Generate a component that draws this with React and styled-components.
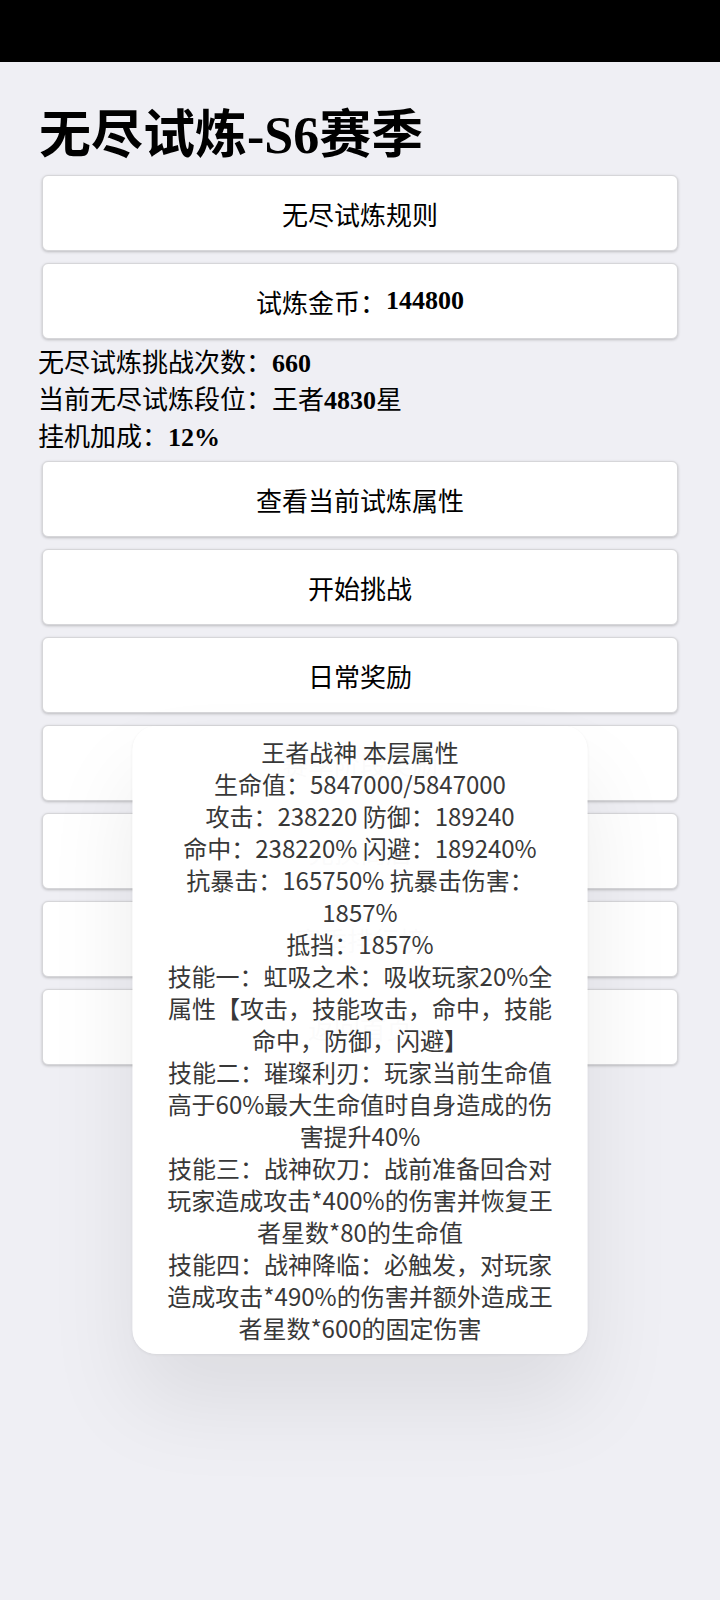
import React from "react";
import styled, { createGlobalStyle } from "styled-components";

const GlobalStyle = createGlobalStyle`
  html, body {
    margin: 0;
    padding: 0;
    background: #efeff4;
  }
  body {
    font-family: "Liberation Serif", "Noto Sans CJK SC", serif;
    color: #000;
  }
`;

const StatusBar = styled.div`
  height: 62px;
  background: #000;
`;

const Page = styled.div`
  position: relative;
  display: flex;
  flex-direction: column;
  min-height: 1538px;
  padding: 0 38px;
  background: #efeff4;
`;

const Title = styled.h1`
  margin: 0;
  padding: 44px 0 3px 1px;
  font-size: 52px;
  line-height: 60px;
  font-weight: bold;
`;

const Button = styled.div`
  box-sizing: border-box;
  height: 76px;
  margin: 6px 4px;
  display: flex;
  align-items: center;
  justify-content: center;
  background: #fff;
  border: 1px solid #d6d6d9;
  border-radius: 6px;
  box-shadow: 0 1px 3px rgba(0, 0, 0, 0.22);
  font-size: 26px;
`;

const InfoList = styled.div`
  margin: 0 0 -1px;
`;

const InfoLine = styled.div`
  font-size: 26px;
  line-height: 37px;
`;

const Toast = styled.div`
  position: absolute;
  top: 664px;
  left: 50%;
  transform: translateX(-50%);
  box-sizing: border-box;
  width: 455px;
  padding: 10px 0;
  background: rgba(255, 255, 255, 0.985);
  border-radius: 24px;
  box-shadow: 0 50px 90px rgba(0, 0, 0, 0.08), 0 1px 3px rgba(0, 0, 0, 0.06);
  font-family: "Noto Sans CJK SC", sans-serif;
  color: #383838;
  text-align: center;
`;

const ToastLine = styled.div`
  font-size: 24px;
  line-height: 32px;
  white-space: nowrap;
`;

const menu = [
  "查看当前试炼属性",
  "开始挑战",
  "日常奖励",
  "赛季阶段奖励",
  "兑换商店",
  "赛季排行榜",
  "返回首页",
];

const toastLines = [
  "王者战神 本层属性",
  "生命值：5847000/5847000",
  "攻击：238220 防御：189240",
  "命中：238220% 闪避：189240%",
  "抗暴击：165750% 抗暴击伤害：",
  "1857%",
  "抵挡：1857%",
  "技能一：虹吸之术：吸收玩家20%全",
  "属性【攻击，技能攻击，命中，技能",
  "命中，防御，闪避】",
  "技能二：璀璨利刃：玩家当前生命值",
  "高于60%最大生命值时自身造成的伤",
  "害提升40%",
  "技能三：战神砍刀：战前准备回合对",
  "玩家造成攻击*400%的伤害并恢复王",
  "者星数*80的生命值",
  "技能四：战神降临：必触发，对玩家",
  "造成攻击*490%的伤害并额外造成王",
  "者星数*600的固定伤害",
];

export default function App() {
  return (
    <>
      <GlobalStyle />
      <StatusBar />
      <Page>
        <Title>无尽试炼-S6赛季</Title>
        <Button>无尽试炼规则</Button>
        <Button>
          试炼金币：<b>144800</b>
        </Button>
        <InfoList>
          <InfoLine>
            无尽试炼挑战次数：<b>660</b>
          </InfoLine>
          <InfoLine>
            当前无尽试炼段位：王者<b>4830</b>星
          </InfoLine>
          <InfoLine>
            挂机加成：<b>12%</b>
          </InfoLine>
        </InfoList>
        {menu.map((label) => (
          <Button key={label}>{label}</Button>
        ))}
        <Toast>
          {toastLines.map((line, i) => (
            <ToastLine key={i}>{line}</ToastLine>
          ))}
        </Toast>
      </Page>
    </>
  );
}
